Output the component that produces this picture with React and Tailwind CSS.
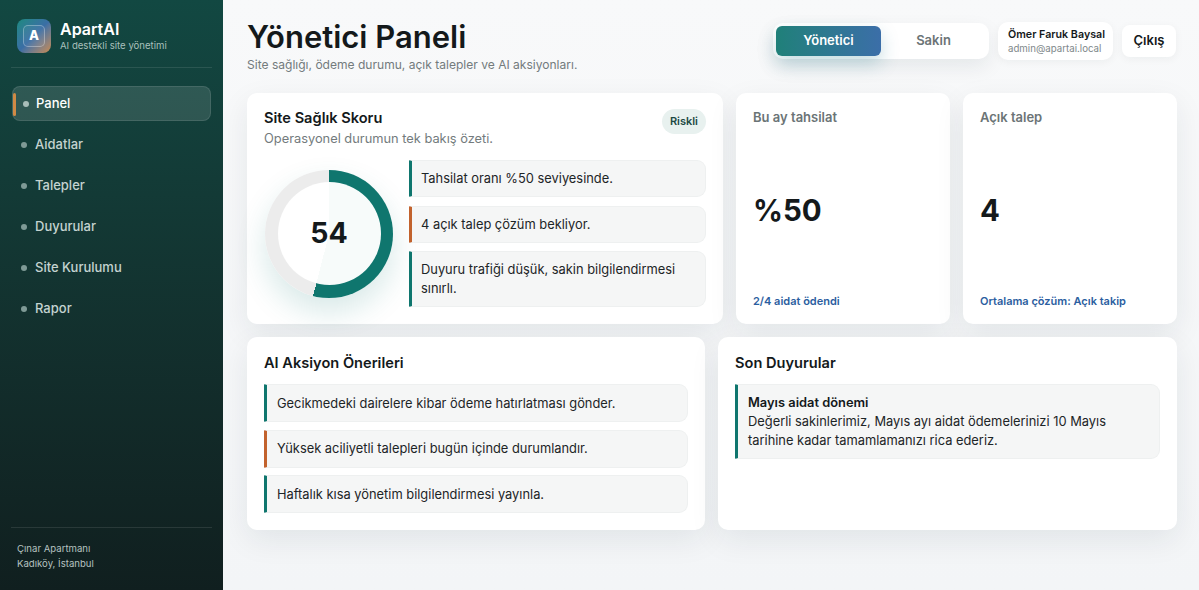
import React from "react";

const navItems = ["Panel", "Aidatlar", "Talepler", "Duyurular", "Site Kurulumu", "Rapor"];

const Note = ({ tone = "teal", className = "py-[8px]", children }) => (
  <div
    className={`rounded-r-[9px] rounded-l-[1px] border border-[#eef0f0] border-l-[3px] bg-[#f5f6f6] px-[10px] text-[12.86px] leading-[19px] text-[#1d2527] ${className} ${
      tone === "teal" ? "border-l-[#0f766e]" : "border-l-[#c2622d]"
    }`}
  >
    {children}
  </div>
);

const Card = ({ className = "", children }) => (
  <section className={`rounded-[10px] bg-white shadow-[0_10px_30px_rgba(15,35,45,0.08)] ${className}`}>
    {children}
  </section>
);

const Stat = ({ label, value, foot }) => (
  <Card className="flex flex-col justify-between px-[17px] pt-[14px] pb-[15px]">
    <div className="text-[13px] font-semibold leading-[20px] text-[#6b7476]">{label}</div>
    <div className="text-[29.5px] font-bold leading-[38px] text-[#14191b]">{value}</div>
    <div className="text-[11px] font-semibold leading-[16px] text-[#2b5ea0]">{foot}</div>
  </Card>
);

export default function App() {
  return (
    <div className="flex h-[590px] w-[1199px] overflow-hidden font-['Inter',sans-serif]">
      <aside className="flex w-[223px] shrink-0 flex-col bg-gradient-to-b from-[#124842] to-[#101f1f] px-[11px] pt-[19px] pb-[19px]">
        <div className="flex items-center gap-[9px] border-b border-white/10 px-[6px] pb-[14px]">
          <div className="flex h-[34px] w-[34px] items-center justify-center rounded-[8px] bg-gradient-to-br from-[#1c8a80] via-[#3a6ea5] to-[#c98a4b]">
            <div className="flex h-[22px] w-[22px] items-center justify-center rounded-[5px] border border-white/30 bg-white/5 text-[13px] font-extrabold text-white">
              A
            </div>
          </div>
          <div>
            <div className="text-[16px] font-semibold leading-[19px] text-white">ApartAI</div>
            <div className="text-[9.6px] leading-[14px] text-[#a9c0bc]">AI destekli site yönetimi</div>
          </div>
        </div>
        <nav className="mx-[1px] mt-[18px] flex flex-col gap-[5px]">
          {navItems.map((item, i) =>
            i === 0 ? (
              <div
                key={item}
                className="relative mb-[1px] flex h-[35px] items-center gap-[7px] rounded-[8px] border border-white/10 bg-white/12 pl-[10px] text-[13px] font-medium text-white"
              >
                <span className="absolute left-0 top-[6px] h-[23px] w-[3px] rounded-full bg-[#d08a45]" />
                <span className="h-[6px] w-[6px] rounded-full bg-[#a8bdb9]" />
                {item}
              </div>
            ) : (
              <div key={item} className="flex h-[36px] items-center gap-[8px] pl-[9px] text-[13px] font-medium text-[#c4d3d0]">
                <span className="h-[6px] w-[6px] rounded-full bg-[#7f9a96]" />
                {item}
              </div>
            )
          )}
        </nav>
        <div className="mt-auto border-t border-white/10 px-[6px] pt-[13px] text-[9.6px] leading-[15px] text-[#b6c2c0]">
          <div>Çınar Apartmanı</div>
          <div>Kadıköy, İstanbul</div>
        </div>
      </aside>

      <main className="flex min-w-0 flex-1 flex-col bg-gradient-to-b from-[#f8f9fa] to-[#f3f5f7] pl-[24px] pr-[22px] pt-[18px]">
        <header className="flex items-start justify-between">
          <div>
            <h1 className="text-[31px] font-semibold leading-[38px] text-[#14191b]">Yönetici Paneli</h1>
            <p className="text-[12.05px] leading-[18px] text-[#737b7d]">
              Site sağlığı, ödeme durumu, açık talepler ve AI aksiyonları.
            </p>
          </div>
          <div className="mr-[1px] mt-[4px] flex items-center gap-[9px]">
            <div className="flex h-[36px] w-[216px] rounded-[10px] bg-white p-[3px] shadow-[0_8px_20px_rgba(15,35,45,0.08)]">
              <div className="flex w-[105px] items-center justify-center rounded-[6px] bg-gradient-to-r from-[#1f8079] to-[#3b6ea8] text-[13px] font-semibold text-white shadow-[0_8px_18px_rgba(30,120,140,0.25)]">
                Yönetici
              </div>
              <div className="flex flex-1 items-center justify-center text-[13px] font-semibold text-[#6b7476]">Sakin</div>
            </div>
            <div className="flex h-[38px] w-[115px] flex-col justify-center rounded-[10px] bg-white pl-[10px] shadow-[0_2px_8px_rgba(15,35,45,0.05)]">
              <div className="text-[10.7px] font-semibold leading-[15px] text-[#14191b]">Ömer Faruk Baysal</div>
              <div className="text-[9.7px] leading-[14px] text-[#80888a]">admin@apartai.local</div>
            </div>
            <div className="flex h-[32px] w-[54px] items-center justify-center rounded-[8px] bg-white text-[13px] font-semibold text-[#14191b] shadow-[0_2px_8px_rgba(15,35,45,0.05)]">
              Çıkış
            </div>
          </div>
        </header>

        <div className="mt-[19px] grid h-[231px] grid-cols-[1fr_214px_214px] gap-[13px]">
          <Card className="px-[17px] pt-[15px]">
            <div className="flex items-start justify-between">
              <div>
                <h2 className="text-[14.6px] font-semibold leading-[20px] text-[#14191b]">Site Sağlık Skoru</h2>
                <p className="mt-[1px] text-[12.83px] leading-[20px] text-[#737b7d]">Operasyonel durumun tek bakış özeti.</p>
              </div>
              <span className="mt-[1px] rounded-full bg-[#e8f1ef] px-[8px] py-[4px] text-[11px] font-semibold leading-[17px] text-[#1d4a44]">
                Riskli
              </span>
            </div>
            <div className="mt-[11px] flex items-center gap-[16px] pl-[1px]">
              <div className="flex h-[128px] w-[128px] shrink-0 items-center justify-center rounded-full bg-[conic-gradient(#0f766e_0_54%,#ececec_54%_100%)] shadow-[0_14px_30px_rgba(15,118,110,0.16)]">
                <div className="flex h-[103px] w-[103px] items-center justify-center rounded-full bg-white/97 text-[28.5px] font-bold text-[#14191b]">
                  54
                </div>
              </div>
              <div className="flex min-w-0 flex-1 flex-col gap-[8.5px]">
                <Note className="py-[8px] pl-[9px]">Tahsilat oranı %50 seviyesinde.</Note>
                <Note tone="orange" className="py-[8px] pl-[9px]">4 açık talep çözüm bekliyor.</Note>
                <Note className="py-[8px] pl-[9px]">Duyuru trafiği düşük, sakin bilgilendirmesi sınırlı.</Note>
              </div>
            </div>
          </Card>
          <Stat label="Bu ay tahsilat" value="%50" foot="2/4 aidat ödendi" />
          <Stat label="Açık talep" value="4" foot="Ortalama çözüm: Açık takip" />
        </div>

        <div className="mt-[13px] grid h-[193px] grid-cols-[458px_1fr] gap-[13px]">
          <Card className="px-[17px] pt-[16px]">
            <h2 className="text-[14.6px] font-semibold leading-[20px] text-[#14191b]">AI Aksiyon Önerileri</h2>
            <div className="mt-[11px] flex flex-col gap-[7.5px]">
              <Note className="py-[8.5px]">Gecikmedeki dairelere kibar ödeme hatırlatması gönder.</Note>
              <Note tone="orange" className="py-[8.5px]">Yüksek aciliyetli talepleri bugün içinde durumlandır.</Note>
              <Note className="py-[8.5px]">Haftalık kısa yönetim bilgilendirmesi yayınla.</Note>
            </div>
          </Card>
          <Card className="px-[17px] pt-[16px]">
            <h2 className="text-[14.6px] font-semibold leading-[20px] text-[#14191b]">Son Duyurular</h2>
            <div className="mt-[11px]">
              <Note>
                <div className="font-semibold text-[#14191b]">Mayıs aidat dönemi</div>
                <div>Değerli sakinlerimiz, Mayıs ayı aidat ödemelerinizi 10 Mayıs tarihine kadar tamamlamanızı rica ederiz.</div>
              </Note>
            </div>
          </Card>
        </div>
      </main>
    </div>
  );
}
